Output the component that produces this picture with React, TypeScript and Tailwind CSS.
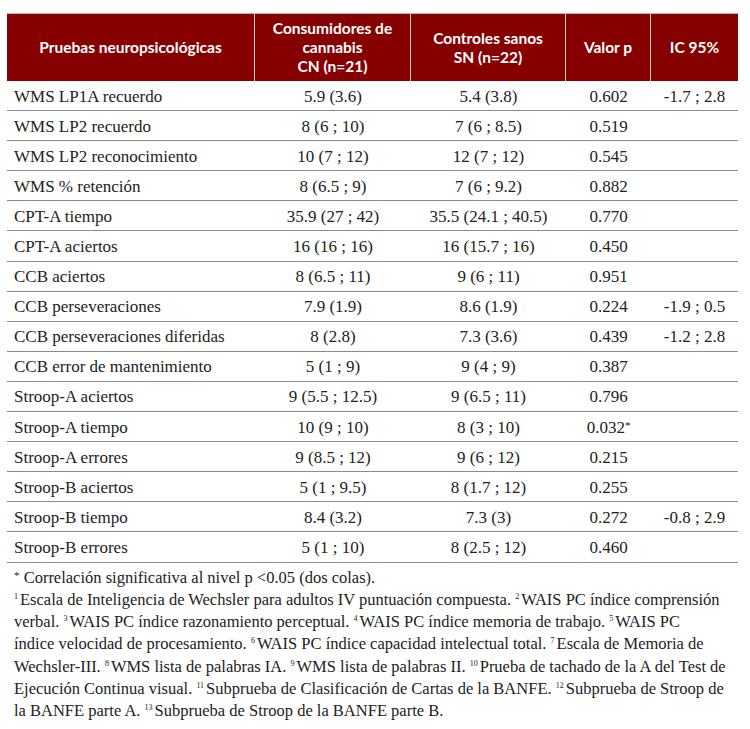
const rows: [string, string, string, string, string][] = [
  ['WMS LP1A recuerdo', '5.9 (3.6)', '5.4 (3.8)', '0.602', '-1.7 ; 2.8'],
  ['WMS LP2 recuerdo', '8 (6 ; 10)', '7 (6 ; 8.5)', '0.519', ''],
  ['WMS LP2 reconocimiento', '10 (7 ; 12)', '12 (7 ; 12)', '0.545', ''],
  ['WMS % retención', '8 (6.5 ; 9)', '7 (6 ; 9.2)', '0.882', ''],
  ['CPT-A tiempo', '35.9 (27 ; 42)', '35.5 (24.1 ; 40.5)', '0.770', ''],
  ['CPT-A aciertos', '16 (16 ; 16)', '16 (15.7 ; 16)', '0.450', ''],
  ['CCB aciertos', '8 (6.5 ; 11)', '9 (6 ; 11)', '0.951', ''],
  ['CCB perseveraciones', '7.9 (1.9)', '8.6 (1.9)', '0.224', '-1.9 ; 0.5'],
  ['CCB perseveraciones diferidas', '8 (2.8)', '7.3 (3.6)', '0.439', '-1.2 ; 2.8'],
  ['CCB error de mantenimiento', '5 (1 ; 9)', '9 (4 ; 9)', '0.387', ''],
  ['Stroop-A aciertos', '9 (5.5 ; 12.5)', '9 (6.5 ; 11)', '0.796', ''],
  ['Stroop-A tiempo', '10 (9 ; 10)', '8 (3 ; 10)', '0.032*', ''],
  ['Stroop-A errores', '9 (8.5 ; 12)', '9 (6 ; 12)', '0.215', ''],
  ['Stroop-B aciertos', '5 (1 ; 9.5)', '8 (1.7 ; 12)', '0.255', ''],
  ['Stroop-B tiempo', '8.4 (3.2)', '7.3 (3)', '0.272', '-0.8 ; 2.9'],
  ['Stroop-B errores', '5 (1 ; 10)', '8 (2.5 ; 12)', '0.460', ''],
];

// footnote marker; zero line-height so it doesn't push the line box
function Sup({ n }: { n: string }) {
  return <span className="text-[8px] leading-[0] align-[6px] mr-[2px]">{n}</span>;
}

function Star() {
  return <span className="text-[11px] leading-[0] align-[4px]">*</span>;
}

function PValue({ v }: { v: string }) {
  if (v.endsWith('*')) {
    return (
      <>
        {v.slice(0, -1)}
        <Star />
      </>
    );
  }
  return <>{v}</>;
}

export default function App() {
  return (
    <div className="w-[750px] h-[729px] bg-white pt-[13px] pl-[7px] font-['Liberation_Serif',serif] text-[#222]">
      <div className="w-[731px]">
        <div className="grid grid-cols-[248px_156px_155px_85px_87px] h-[68px] bg-[#870000] text-white font-['Lato',sans-serif] font-bold text-[15.5px] leading-[19px] border-t border-[#b9b9b9]">
          <div className="flex items-center justify-center border-r border-[#c9c9c9]">Pruebas neuropsicológicas</div>
          <div className="flex items-center justify-center text-center border-r border-[#c9c9c9]">
            Consumidores de
            <br />
            cannabis
            <br />
            CN (n=21)
          </div>
          <div className="flex items-center justify-center text-center border-r border-[#c9c9c9]">
            Controles sanos
            <br />
            SN (n=22)
          </div>
          <div className="flex items-center justify-center border-r border-[#c9c9c9]">Valor p</div>
          <div className="flex items-center justify-center">IC 95%</div>
        </div>
        {rows.map((r) => (
          <div
            key={r[0]}
            className="grid grid-cols-[248px_156px_155px_85px_87px] h-[30.1px] items-center pt-[2px] border-b border-[#8c8c8c] text-[17px] leading-[20px]"
          >
            <div className="pl-[7px] whitespace-nowrap">{r[0]}</div>
            <div className="text-center whitespace-nowrap">{r[1]}</div>
            <div className="text-center whitespace-nowrap">{r[2]}</div>
            <div className="text-center">
              <PValue v={r[3]} />
            </div>
            <div className="text-center whitespace-nowrap">{r[4]}</div>
          </div>
        ))}
        <div className="pt-[4px] pl-[7px] text-[16.5px] leading-[22.3px] whitespace-nowrap">
          <p>
            <Star /> Correlación significativa al nivel p &lt;0.05 (dos colas).
          </p>
          <p>
            <Sup n="1" />Escala de Inteligencia de Wechsler para adultos IV puntuación compuesta. <Sup n="2" />WAIS PC índice comprensión
          </p>
          <p>
            verbal. <Sup n="3" />WAIS PC índice razonamiento perceptual. <Sup n="4" />WAIS PC índice memoria de trabajo. <Sup n="5" />WAIS PC
          </p>
          <p>
            índice velocidad de procesamiento. <Sup n="6" />WAIS PC índice capacidad intelectual total. <Sup n="7" />Escala de Memoria de
          </p>
          <p>
            Wechsler-III. <Sup n="8" />WMS lista de palabras IA. <Sup n="9" />WMS lista de palabras II. <Sup n="10" />Prueba de tachado de la A del Test de
          </p>
          <p>
            Ejecución Continua visual. <Sup n="11" />Subprueba de Clasificación de Cartas de la BANFE. <Sup n="12" />Subprueba de Stroop de
          </p>
          <p>
            la BANFE parte A. <Sup n="13" />Subprueba de Stroop de la BANFE parte B.
          </p>
        </div>
      </div>
    </div>
  );
}
